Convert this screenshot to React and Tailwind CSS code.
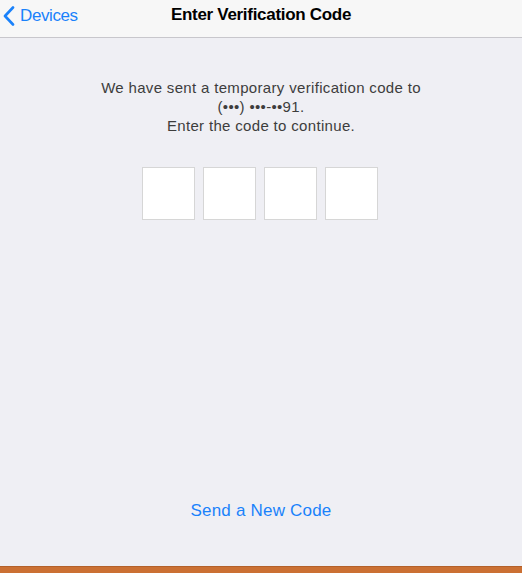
import React from 'react';

function BackChevron() {
  return (
    <svg width="12" height="20" viewBox="0 0 12 20" fill="none" aria-hidden="true">
      <path d="M10 1.5L2 10l8 8.5" stroke="#1a82fb" strokeWidth="2.6" strokeLinecap="round" strokeLinejoin="round" />
    </svg>
  );
}

function CodeBox() {
  return <div className="h-[53px] w-[53px] border border-[#d6d6d6] bg-white" />;
}

export default function App() {
  return (
    <div
      className="flex h-[573px] w-[522px] flex-col bg-[#efeff4]"
      style={{ fontFamily: '"Liberation Sans", Arial, sans-serif' }}
    >
      <header className="relative flex h-[38px] shrink-0 items-center justify-center border-b border-[#c8c7cc] bg-[#f7f7f7]">
        <button className="absolute left-[3px] top-0 flex h-[31px] items-center gap-[5px] text-[17px] tracking-[-0.4px] text-[#1a82fb]">
          <BackChevron />
          <span>Devices</span>
        </button>
        <h1 className="-mt-[7px] text-[17px] font-bold tracking-[-0.3px] text-black">Enter Verification Code</h1>
      </header>

      <main className="flex flex-1 flex-col items-center">
        <p className="mt-[40px] text-center text-[15px] leading-[19px] tracking-[0.33px] text-[#3d3d3d]">
          We have sent a temporary verification code to
          <br />
          (•••) •••-••91.
          <br />
          Enter the code to continue.
        </p>

        <div className="mr-[2px] mt-[32px] flex gap-[8px]">
          <CodeBox />
          <CodeBox />
          <CodeBox />
          <CodeBox />
        </div>

        <button className="mt-auto mb-[43px] text-[17px] tracking-[0.2px] text-[#1a82fb]">Send a New Code</button>
      </main>

      <div className="h-[7px] shrink-0 border-t border-[#b3602a] bg-[#cb7033]" />
    </div>
  );
}
